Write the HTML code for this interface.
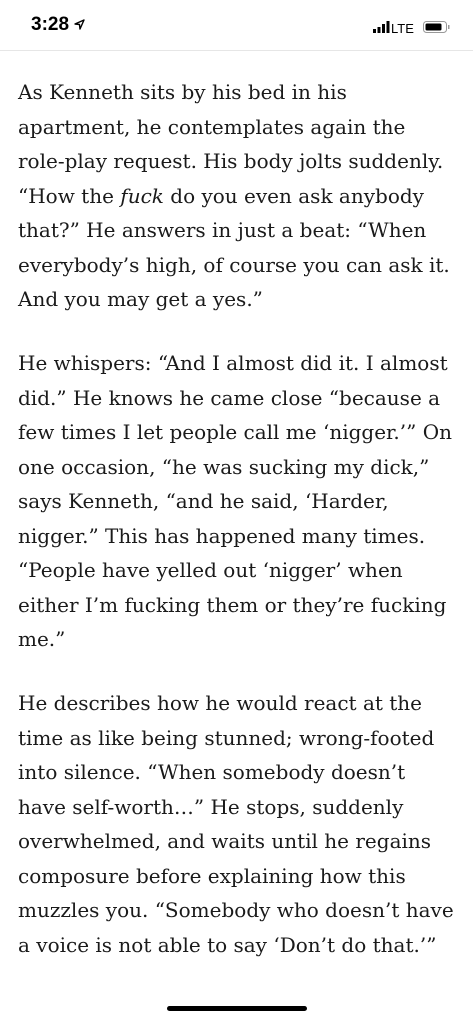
<!DOCTYPE html>
<html><head><meta charset="utf-8"><style>
html,body{margin:0;padding:0;background:#fff;width:473px;height:1024px;overflow:hidden;position:relative}
.sb{position:absolute;top:0;left:0;width:473px;height:50px;border-bottom:1px solid #e6e6e6;font-family:"Liberation Sans",sans-serif}
.time{position:absolute;left:31px;top:14px;font-size:19px;font-weight:bold;color:#000}
.txt{position:absolute;left:18px;top:75px;font-family:"DejaVu Serif",serif;font-size:20px;color:#1a1a1a;letter-spacing:0px}
.l{height:34.5px;line-height:34.5px;white-space:nowrap}
.p{margin-bottom:29.5px}
.hb{position:absolute;left:167px;top:1006px;width:140px;height:5px;border-radius:3px;background:#000}
</style></head><body>
<div class="sb">
<div class="time">3:28 <svg width="11" height="11" viewBox="0 0 11 11" style="vertical-align:0"><path d="M10 1 L1 5 L5.5 5.5 L6 10 Z" fill="none" stroke="#000" stroke-width="1.4" stroke-linejoin="round"/></svg></div>
<svg style="position:absolute;left:373px;top:20px" width="80" height="16" viewBox="0 0 80 16">
<rect x="0" y="9" width="3" height="4" fill="#000"/><rect x="4.5" y="7" width="3" height="6" fill="#000"/><rect x="9" y="4" width="3" height="9" fill="#000"/><rect x="13.5" y="1" width="3" height="12" fill="#000"/>
<text x="18" y="13" font-family="Liberation Sans,sans-serif" font-size="13" fill="#000">LTE</text>
<rect x="50.5" y="1.5" width="23" height="11" rx="3" fill="none" stroke="#999" stroke-width="1"/><rect x="52.5" y="3.5" width="16" height="7" rx="1.5" fill="#000"/><rect x="75" y="5" width="1.5" height="4" fill="#999"/>
</svg>
</div>
<div class="txt">
<div class="p">
<div class="l">As Kenneth sits by his bed in his</div>
<div class="l">apartment, he contemplates again the</div>
<div class="l">role-play request. His body jolts suddenly.</div>
<div class="l">“How the <i>fuck</i> do you even ask anybody</div>
<div class="l">that?” He answers in just a beat: “When</div>
<div class="l">everybody’s high, of course you can ask it.</div>
<div class="l">And you may get a yes.”</div>
</div>
<div class="p">
<div class="l">He whispers: “And I almost did it. I almost</div>
<div class="l">did.” He knows he came close “because a</div>
<div class="l">few times I let people call me ‘nigger.’” On</div>
<div class="l">one occasion, “he was sucking my dick,”</div>
<div class="l">says Kenneth, “and he said, ‘Harder,</div>
<div class="l">nigger.” This has happened many times.</div>
<div class="l">“People have yelled out ‘nigger’ when</div>
<div class="l">either I’m fucking them or they’re fucking</div>
<div class="l">me.”</div>
</div>
<div class="p">
<div class="l">He describes how he would react at the</div>
<div class="l">time as like being stunned; wrong-footed</div>
<div class="l">into silence. “When somebody doesn’t</div>
<div class="l">have self-worth…” He stops, suddenly</div>
<div class="l">overwhelmed, and waits until he regains</div>
<div class="l">composure before explaining how this</div>
<div class="l">muzzles you. “Somebody who doesn’t have</div>
<div class="l">a voice is not able to say ‘Don’t do that.’”</div>
</div>
</div>
<div class="hb"></div>
</body></html>
